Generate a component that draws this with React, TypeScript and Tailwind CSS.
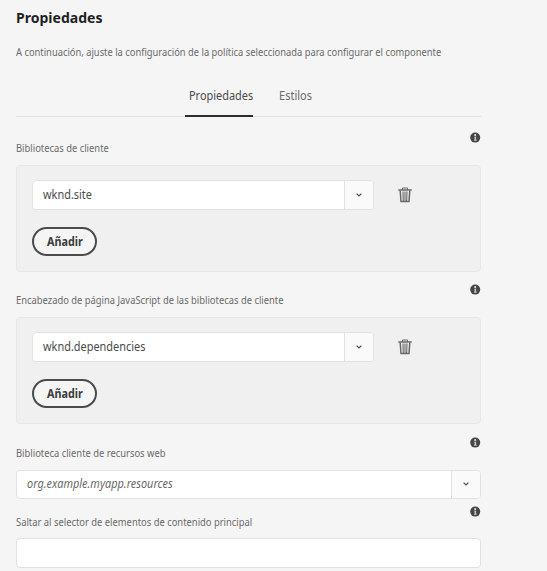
import type { ReactNode } from 'react';

function InfoIcon() {
  return (
    <svg className="size-[11px] shrink-0" viewBox="0 0 11 11" aria-hidden="true">
      <circle cx="5.2" cy="5.6" r="5" fill="#454545" />
      <circle cx="5.2" cy="3.1" r="1.1" fill="#dcdcdc" />
      <path d="M4 4.7H6.1V7.8H6.7V8.8H3.9V7.8H4.6V5.6H4Z" fill="#c8c8c8" />
    </svg>
  );
}

function TrashIcon() {
  return (
    <svg className="h-4 w-[14px]" viewBox="0 0 14 16" fill="none" stroke="#686868" aria-hidden="true">
      <path d="M0.3 3H13.7" strokeWidth="1.5" />
      <path d="M4.5 2.8V1H9.5V2.8" />
      <path d="M2.2 3.5L3 14.6H11L11.8 3.5" strokeWidth="1.5" />
      <path d="M5 4.5L5.3 14M7 4.5V14M9 4.5L8.7 14" strokeWidth="1.1" />
    </svg>
  );
}

function ChevronIcon() {
  return (
    <svg className="h-1 w-[6px]" viewBox="0 0 6 4" fill="none" stroke="#505050" strokeWidth="1.3" aria-hidden="true">
      <path d="M0.6 0.6L3 2.9L5.4 0.6" />
    </svg>
  );
}

function FieldHeader({ children }: { children: ReactNode }) {
  return (
    <div className="flex h-[33px] justify-between">
      <div className="pt-2 text-[11px] leading-4 whitespace-nowrap text-[#6a6a6a]">
        <span className="inline-block origin-left scale-x-[0.853]">{children}</span>
      </div>
      <InfoIcon />
    </div>
  );
}

function Select({ children }: { children: ReactNode }) {
  return (
    <div className="flex h-full overflow-hidden rounded-[4px] border border-[#e1e1e1] bg-white">
      <div className="flex flex-1 items-center pl-[10px] text-[12px] whitespace-nowrap text-[#4b4b4b]">
        <span className="inline-block origin-left scale-x-[0.91]">{children}</span>
      </div>
      <div className="flex w-[29px] items-center justify-center border-l border-[#e1e1e1] bg-[#fafafa]">
        <ChevronIcon />
      </div>
    </div>
  );
}

function LibraryPanel({ children }: { children: ReactNode }) {
  return (
    <div className="h-[107px] rounded-[4px] border border-[#e7e7e7] bg-[#f0f0f0] pt-[14px] pl-[15px]">
      <div className="flex items-center">
        <div className="h-[30px] w-[342px]">
          <Select>{children}</Select>
        </div>
        <button className="ml-6">
          <TrashIcon />
        </button>
      </div>
      <button className="mt-[17px] flex h-[29px] w-[65px] items-center justify-center rounded-full border-2 border-[#4b4b4b] bg-[#f5f5f5] text-[12px] font-bold text-[#3c3c3c]">
        <span className="inline-block scale-x-[0.9]">Añadir</span>
      </button>
    </div>
  );
}

export default function App() {
  return (
    <div className="h-[571px] overflow-hidden bg-[#f5f5f5] pl-4 font-['Noto_Sans',sans-serif]">
      <div className="w-[464.5px]">
        <h1 className="pt-[7px] text-[15px] leading-5 font-bold whitespace-nowrap text-[#1f1f1f]">
          <span className="inline-block origin-left scale-x-[0.935]">Propiedades</span>
        </h1>
        <p className="mt-[17px] text-[11px] leading-4 whitespace-nowrap text-[#6a6a6a]">
          <span className="inline-block origin-left scale-x-[0.85]">
            A continuación, ajuste la configuración de la política seleccionada para configurar el componente
          </span>
        </p>
        <div className="mt-[21px] flex h-[36px] gap-[22px] border-b border-[#e1e1e1] pl-[169px] text-[12px]">
          <div className="h-[36px] w-[68px] border-b-2 border-[#2c2c2c] pt-[7px] pl-1 leading-4 whitespace-nowrap text-[#4b4b4b]">
            <span className="inline-block origin-left scale-x-[0.91]">Propiedades</span>
          </div>
          <div className="pt-[7px] pl-1 leading-4 text-[#6a6a6a]">
            <span className="inline-block origin-left scale-x-[0.92]">Estilos</span>
          </div>
        </div>
        <div className="mt-[15px]">
          <FieldHeader>Bibliotecas de cliente</FieldHeader>
          <LibraryPanel>wknd.site</LibraryPanel>
        </div>
        <div className="mt-[12.3px]">
          <FieldHeader>Encabezado de página JavaScript de las bibliotecas de cliente</FieldHeader>
          <LibraryPanel>wknd.dependencies</LibraryPanel>
        </div>
        <div className="mt-[12.7px]">
          <FieldHeader>Biblioteca cliente de recursos web</FieldHeader>
          <div className="h-[29px]">
            <Select>
              <span className="text-[#6a6a6a] italic">org.example.myapp.resources</span>
            </Select>
          </div>
        </div>
        <div className="mt-[7px]">
          <FieldHeader>Saltar al selector de elementos de contenido principal</FieldHeader>
          <div className="-mt-px h-[30px] rounded-[4px] border border-[#e1e1e1] bg-white" />
        </div>
      </div>
    </div>
  );
}
